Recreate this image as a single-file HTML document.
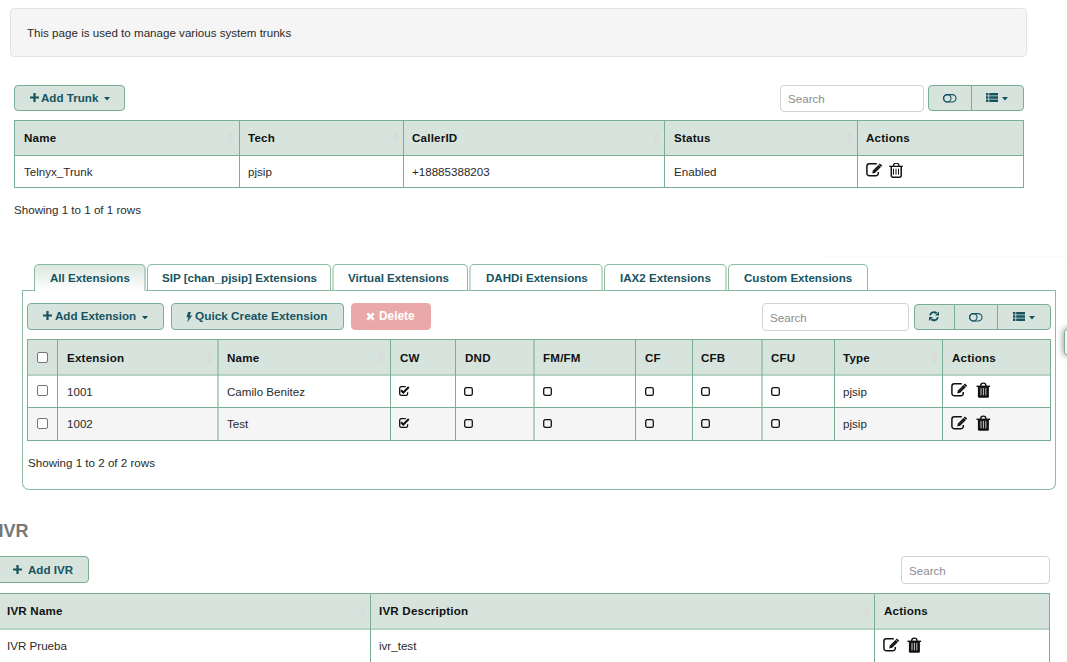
<!DOCTYPE html>
<html><head><meta charset="utf-8"><style>
html,body{margin:0;padding:0;width:1067px;height:662px;overflow:hidden;background:#fff;position:relative;font-family:"Liberation Sans",sans-serif;}
</style></head><body>
<div style="position:absolute;left:10px;top:8px;width:1017px;height:49px;box-sizing:border-box;background:#f5f5f5;border:1px solid #e3e3e3;border-radius:4px"></div><div style="position:absolute;left:27px;top:27.00px;font-size:11.6px;line-height:11.6px;font-weight:400;color:#2a2a2a;white-space:nowrap;">This page is used to manage various system trunks</div><div style="position:absolute;left:14px;top:85px;width:111px;height:26px;box-sizing:border-box;background:#d6e4dd;border:1px solid #7aae93;border-radius:4px"></div><svg style="position:absolute;left:30px;top:93px" width="9" height="9" viewBox="0 0 9 9"><path d="M3.4 0h2.2v3.4H9v2.2H5.6V9H3.4V5.6H0V3.4h3.4z" fill="#17535f"/></svg><div style="position:absolute;left:41px;top:92.00px;font-size:11.6px;line-height:11.6px;font-weight:700;color:#17535f;white-space:nowrap;">Add Trunk</div><svg style="position:absolute;left:103.5px;top:97px" width="6" height="3.5" viewBox="0 0 6 3.5"><path d="M0 0h6L3 3.5z" fill="#17535f"/></svg><div style="position:absolute;left:780px;top:85px;width:144px;height:27px;box-sizing:border-box;background:#fff;border:1px solid #d2d2d2;border-radius:4px"></div><div style="position:absolute;left:788px;top:93.00px;font-size:11.6px;line-height:11.6px;font-weight:400;color:#8c8c8c;white-space:nowrap;">Search</div><div style="position:absolute;left:928px;top:85px;width:96px;height:26px;box-sizing:border-box;background:#d6e4dd;border:1px solid #7aae93;border-radius:4px"></div><div style="position:absolute;left:971px;top:86px;width:1px;height:24px;box-sizing:border-box;background:#7aae93"></div><svg style="position:absolute;left:943.3px;top:93.5px" width="14" height="9" viewBox="0 0 14 9"><rect x="0.6" y="0.6" width="12.4" height="7.4" rx="3.7" fill="none" stroke="#17535f" stroke-width="1.1"/><circle cx="4.3" cy="4.3" r="3.7" fill="none" stroke="#17535f" stroke-width="1.1"/></svg><svg style="position:absolute;left:986px;top:93px" width="12" height="9" viewBox="0 0 12 9"><path d="M0 0h2.4v2.4H0zM0 3.3h2.4v2.4H0zM0 6.6h2.4V9H0zM3.2 0H12v2.4H3.2zM3.2 3.3H12v2.4H3.2zM3.2 6.6H12V9H3.2z" fill="#17535f"/></svg><svg style="position:absolute;left:1002px;top:97px" width="6" height="3.5" viewBox="0 0 6 3.5"><path d="M0 0h6L3 3.5z" fill="#17535f"/></svg><div style="position:absolute;left:14px;top:120px;width:1010px;height:35px;box-sizing:border-box;background:#d6e4dd"></div><div style="position:absolute;left:14px;top:120px;width:1010px;height:1px;box-sizing:border-box;background:#7aae93"></div><div style="position:absolute;left:14px;top:155px;width:1010px;height:1px;box-sizing:border-box;background:#7aae93"></div><div style="position:absolute;left:14px;top:187px;width:1010px;height:1px;box-sizing:border-box;background:#7aae93"></div><div style="position:absolute;left:14px;top:120px;width:1px;height:68px;box-sizing:border-box;background:#7aae93"></div><div style="position:absolute;left:1023px;top:120px;width:1px;height:68px;box-sizing:border-box;background:#7aae93"></div><div style="position:absolute;left:239px;top:120px;width:1px;height:68px;box-sizing:border-box;background:#7aae93"></div><div style="position:absolute;left:403px;top:120px;width:1px;height:68px;box-sizing:border-box;background:#7aae93"></div><div style="position:absolute;left:664px;top:120px;width:1px;height:68px;box-sizing:border-box;background:#7aae93"></div><div style="position:absolute;left:857px;top:120px;width:1px;height:68px;box-sizing:border-box;background:#7aae93"></div><div style="position:absolute;left:24px;top:132.00px;font-size:11.6px;line-height:11.6px;font-weight:700;color:#111;white-space:nowrap;letter-spacing:0.2px">Name</div><div style="position:absolute;left:248px;top:132.00px;font-size:11.6px;line-height:11.6px;font-weight:700;color:#111;white-space:nowrap;letter-spacing:0.2px">Tech</div><div style="position:absolute;left:412px;top:132.00px;font-size:11.6px;line-height:11.6px;font-weight:700;color:#111;white-space:nowrap;letter-spacing:0.2px">CallerID</div><div style="position:absolute;left:674px;top:132.00px;font-size:11.6px;line-height:11.6px;font-weight:700;color:#111;white-space:nowrap;letter-spacing:0.2px">Status</div><div style="position:absolute;left:866px;top:132.00px;font-size:11.6px;line-height:11.6px;font-weight:700;color:#111;white-space:nowrap;letter-spacing:0.2px">Actions</div><div style="position:absolute;left:24px;top:166.00px;font-size:11.6px;line-height:11.6px;font-weight:400;color:#2a2a2a;white-space:nowrap;">Telnyx_Trunk</div><div style="position:absolute;left:248px;top:166.00px;font-size:11.6px;line-height:11.6px;font-weight:400;color:#2a2a2a;white-space:nowrap;">pjsip</div><div style="position:absolute;left:412px;top:166.00px;font-size:11.6px;line-height:11.6px;font-weight:400;color:#2a2a2a;white-space:nowrap;">+18885388203</div><div style="position:absolute;left:674px;top:166.00px;font-size:11.6px;line-height:11.6px;font-weight:400;color:#2a2a2a;white-space:nowrap;">Enabled</div><svg style="position:absolute;left:864px;top:161px" width="20" height="16" viewBox="0 0 20 16"><path d="M12.8 2.8H5.4A2.5 2.5 0 0 0 2.9 5.3V12.2A2.5 2.5 0 0 0 5.4 14.7H11.8A2.5 2.5 0 0 0 14.3 12.2V11" fill="none" stroke="#111" stroke-width="1.5"/><path d="M8.2 12.4L8.9 9.5L15.9 2.5L18.2 4.8L11.2 11.8Z" fill="#111"/><path d="M14.6 3.8L16.9 6.1" stroke="#fff" stroke-width="0.6"/><path d="M10.3 10.1L14.3 6.1" stroke="#777" stroke-width="0.7" stroke-dasharray="0.8 0.8"/></svg><svg style="position:absolute;left:889px;top:163px" width="14" height="15" viewBox="0 0 14 15"><rect x="0.2" y="2.7" width="13.6" height="1.3" fill="#111"/><path d="M4.4 3V2.9A2.8 2.8 0 0 1 10 2.9V3" fill="none" stroke="#111" stroke-width="1.2"/><path d="M2.3 3.6V12.7A1.5 1.5 0 0 0 3.8 14.2H10.7A1.5 1.5 0 0 0 12.2 12.7V3.6" fill="none" stroke="#111" stroke-width="1.5"/><path d="M4.5 5.7v5.9M7 5.7v5.9M9.5 5.7v5.9" stroke="#111" stroke-width="1"/></svg><svg style="position:absolute;left:227.0px;top:132.2px" width="7" height="11.5" viewBox="0 0 7 11.5"><path d="M0 5.2L3.5 0L7 5.2zM0 6.3L3.5 11.5L7 6.3z" fill="#d9dbda"/></svg><svg style="position:absolute;left:391.5px;top:132.2px" width="7" height="11.5" viewBox="0 0 7 11.5"><path d="M0 5.2L3.5 0L7 5.2zM0 6.3L3.5 11.5L7 6.3z" fill="#d9dbda"/></svg><svg style="position:absolute;left:652.5px;top:132.2px" width="7" height="11.5" viewBox="0 0 7 11.5"><path d="M0 5.2L3.5 0L7 5.2zM0 6.3L3.5 11.5L7 6.3z" fill="#d9dbda"/></svg><svg style="position:absolute;left:845.5px;top:132.2px" width="7" height="11.5" viewBox="0 0 7 11.5"><path d="M0 5.2L3.5 0L7 5.2zM0 6.3L3.5 11.5L7 6.3z" fill="#d9dbda"/></svg><div style="position:absolute;left:14px;top:204.00px;font-size:11.6px;line-height:11.6px;font-weight:400;color:#2a2a2a;white-space:nowrap;">Showing 1 to 1 of 1 rows</div><div style="position:absolute;left:22px;top:290px;width:1034px;height:200px;box-sizing:border-box;border:1px solid #8cbba1;border-top:none;border-radius:0 0 7px 7px"></div><div style="position:absolute;left:22px;top:290px;width:1034px;height:1px;box-sizing:border-box;background:#8cbba1"></div><div style="position:absolute;left:34px;top:264px;width:112px;height:27px;box-sizing:border-box;border-top:1px solid #8cbba1;border-left:1px solid #8cbba1;border-right:2px solid rgba(140,187,161,0.55);border-radius:5px 5px 0 0;background:linear-gradient(#dbe7e1,#fff)"></div><div style="position:absolute;left:50px;top:272.00px;font-size:11.6px;line-height:11.6px;font-weight:700;color:#17535f;white-space:nowrap;">All Extensions</div><div style="position:absolute;left:147px;top:264px;width:184px;height:26px;box-sizing:border-box;border-top:1px solid #8cbba1;border-left:1px solid #8cbba1;border-right:1px solid #8cbba1;border-radius:5px 5px 0 0;background:#fff"></div><div style="position:absolute;left:162px;top:272.00px;font-size:11.6px;line-height:11.6px;font-weight:700;color:#17535f;white-space:nowrap;">SIP [chan_pjsip] Extensions</div><div style="position:absolute;left:332px;top:264px;width:136px;height:26px;box-sizing:border-box;border-top:1px solid #8cbba1;border-left:2px solid rgba(140,187,161,0.55);border-right:1px solid #8cbba1;border-radius:5px 5px 0 0;background:#fff"></div><div style="position:absolute;left:348px;top:272.00px;font-size:11.6px;line-height:11.6px;font-weight:700;color:#17535f;white-space:nowrap;">Virtual Extensions</div><div style="position:absolute;left:469px;top:264px;width:134px;height:26px;box-sizing:border-box;border-top:1px solid #8cbba1;border-left:2px solid rgba(140,187,161,0.55);border-right:2px solid rgba(140,187,161,0.55);border-radius:5px 5px 0 0;background:#fff"></div><div style="position:absolute;left:486px;top:272.00px;font-size:11.6px;line-height:11.6px;font-weight:700;color:#17535f;white-space:nowrap;">DAHDi Extensions</div><div style="position:absolute;left:604px;top:264px;width:123px;height:26px;box-sizing:border-box;border-top:1px solid #8cbba1;border-left:1px solid #8cbba1;border-right:2px solid rgba(140,187,161,0.55);border-radius:5px 5px 0 0;background:#fff"></div><div style="position:absolute;left:620px;top:272.00px;font-size:11.6px;line-height:11.6px;font-weight:700;color:#17535f;white-space:nowrap;">IAX2 Extensions</div><div style="position:absolute;left:728px;top:264px;width:140px;height:26px;box-sizing:border-box;border-top:1px solid #8cbba1;border-left:1px solid #8cbba1;border-right:1px solid #8cbba1;border-radius:5px 5px 0 0;background:#fff"></div><div style="position:absolute;left:744px;top:272.00px;font-size:11.6px;line-height:11.6px;font-weight:700;color:#17535f;white-space:nowrap;">Custom Extensions</div><div style="position:absolute;left:27px;top:303px;width:137px;height:27px;box-sizing:border-box;background:#d6e4dd;border:1px solid #7aae93;border-radius:4px"></div><svg style="position:absolute;left:43px;top:311px" width="9" height="9" viewBox="0 0 9 9"><path d="M3.4 0h2.2v3.4H9v2.2H5.6V9H3.4V5.6H0V3.4h3.4z" fill="#17535f"/></svg><div style="position:absolute;left:55px;top:310.00px;font-size:11.6px;line-height:11.6px;font-weight:700;color:#17535f;white-space:nowrap;">Add Extension</div><svg style="position:absolute;left:141.5px;top:315.8px" width="6" height="3.5" viewBox="0 0 6 3.5"><path d="M0 0h6L3 3.5z" fill="#17535f"/></svg><div style="position:absolute;left:171px;top:303px;width:173px;height:27px;box-sizing:border-box;background:#d6e4dd;border:1px solid #7aae93;border-radius:4px"></div><svg style="position:absolute;left:185.9px;top:311.6px" width="6.5" height="10.5" viewBox="0 0 6.5 10.5"><path d="M2.2 0H5L3.6 3.4H6.2L1.2 10.5L2.4 5.2H0.4Z" fill="#17535f"/></svg><div style="position:absolute;left:195px;top:311.00px;font-size:11.8px;line-height:11.8px;font-weight:700;color:#17535f;white-space:nowrap;">Quick Create Extension</div><div style="position:absolute;left:351px;top:303px;width:80px;height:27px;box-sizing:border-box;background:#eba8a8;border:1px solid #eba8a8;border-radius:4px"></div><svg style="position:absolute;left:366px;top:311.5px" width="9" height="9" viewBox="0 0 9 9"><path d="M1.3 1.3l6.4 6.4M7.7 1.3L1.3 7.7" stroke="#fff" stroke-width="2.6"/></svg><div style="position:absolute;left:379px;top:311.00px;font-size:11.9px;line-height:11.9px;font-weight:700;color:#fff;white-space:nowrap;">Delete</div><div style="position:absolute;left:762px;top:303px;width:147px;height:28px;box-sizing:border-box;background:#fff;border:1px solid #d2d2d2;border-radius:4px"></div><div style="position:absolute;left:770px;top:312.00px;font-size:11.6px;line-height:11.6px;font-weight:400;color:#8c8c8c;white-space:nowrap;">Search</div><div style="position:absolute;left:914px;top:304px;width:137px;height:26px;box-sizing:border-box;background:#d6e4dd;border:1px solid #7aae93;border-radius:4px"></div><div style="position:absolute;left:954px;top:305px;width:1px;height:24px;box-sizing:border-box;background:#7aae93"></div><div style="position:absolute;left:997px;top:305px;width:1px;height:24px;box-sizing:border-box;background:#7aae93"></div><svg style="position:absolute;left:929.2px;top:311.3px" width="10" height="10.5" viewBox="0 0 10 10.5"><path d="M1.1 4.4A3.9 3.9 0 0 1 7.6 2.3M8.9 6.1A3.9 3.9 0 0 1 2.4 8.2" fill="none" stroke="#17535f" stroke-width="1.9"/><path d="M10 0.6V4.6H6zM0 9.9V5.9H4z" fill="#17535f"/></svg><svg style="position:absolute;left:969.3px;top:312.8px" width="14" height="9" viewBox="0 0 14 9"><rect x="0.6" y="0.6" width="12.4" height="7.4" rx="3.7" fill="none" stroke="#17535f" stroke-width="1.1"/><circle cx="4.3" cy="4.3" r="3.7" fill="none" stroke="#17535f" stroke-width="1.1"/></svg><svg style="position:absolute;left:1012.7px;top:311.9px" width="12" height="9" viewBox="0 0 12 9"><path d="M0 0h2.4v2.4H0zM0 3.3h2.4v2.4H0zM0 6.6h2.4V9H0zM3.2 0H12v2.4H3.2zM3.2 3.3H12v2.4H3.2zM3.2 6.6H12V9H3.2z" fill="#17535f"/></svg><svg style="position:absolute;left:1029px;top:316px" width="6" height="3.5" viewBox="0 0 6 3.5"><path d="M0 0h6L3 3.5z" fill="#17535f"/></svg><div style="position:absolute;left:27px;top:339px;width:1024px;height:35px;box-sizing:border-box;background:#d6e4dd"></div><div style="position:absolute;left:27px;top:407px;width:1024px;height:33px;box-sizing:border-box;background:#f5f5f5"></div><div style="position:absolute;left:27px;top:339px;width:1024px;height:1px;box-sizing:border-box;background:#7aae93"></div><div style="position:absolute;left:27px;top:374px;width:1024px;height:2px;box-sizing:border-box;background:rgba(122,174,147,0.55)"></div><div style="position:absolute;left:27px;top:407px;width:1024px;height:1px;box-sizing:border-box;background:#7aae93"></div><div style="position:absolute;left:27px;top:440px;width:1024px;height:1px;box-sizing:border-box;background:#7aae93"></div><div style="position:absolute;left:27px;top:339px;width:1px;height:102px;box-sizing:border-box;background:#7aae93"></div><div style="position:absolute;left:1050px;top:339px;width:1px;height:102px;box-sizing:border-box;background:#7aae93"></div><div style="position:absolute;left:57px;top:339px;width:1px;height:102px;box-sizing:border-box;background:#7aae93"></div><div style="position:absolute;left:217px;top:339px;width:2px;height:102px;box-sizing:border-box;background:rgba(122,174,147,0.55)"></div><div style="position:absolute;left:390px;top:339px;width:1px;height:102px;box-sizing:border-box;background:#7aae93"></div><div style="position:absolute;left:455px;top:339px;width:1px;height:102px;box-sizing:border-box;background:#7aae93"></div><div style="position:absolute;left:533px;top:339px;width:2px;height:102px;box-sizing:border-box;background:rgba(122,174,147,0.55)"></div><div style="position:absolute;left:635px;top:339px;width:1px;height:102px;box-sizing:border-box;background:#7aae93"></div><div style="position:absolute;left:692px;top:339px;width:1px;height:102px;box-sizing:border-box;background:#7aae93"></div><div style="position:absolute;left:761px;top:339px;width:2px;height:102px;box-sizing:border-box;background:rgba(122,174,147,0.55)"></div><div style="position:absolute;left:834px;top:339px;width:1px;height:102px;box-sizing:border-box;background:#7aae93"></div><div style="position:absolute;left:942px;top:339px;width:1px;height:102px;box-sizing:border-box;background:#7aae93"></div><div style="position:absolute;left:67px;top:352.00px;font-size:11.6px;line-height:11.6px;font-weight:700;color:#111;white-space:nowrap;letter-spacing:0.2px">Extension</div><div style="position:absolute;left:227px;top:352.00px;font-size:11.6px;line-height:11.6px;font-weight:700;color:#111;white-space:nowrap;letter-spacing:0.2px">Name</div><div style="position:absolute;left:400px;top:352.00px;font-size:11.6px;line-height:11.6px;font-weight:700;color:#111;white-space:nowrap;letter-spacing:0.2px">CW</div><div style="position:absolute;left:465px;top:352.00px;font-size:11.6px;line-height:11.6px;font-weight:700;color:#111;white-space:nowrap;letter-spacing:0.2px">DND</div><div style="position:absolute;left:543px;top:352.00px;font-size:11.6px;line-height:11.6px;font-weight:700;color:#111;white-space:nowrap;letter-spacing:0.2px">FM/FM</div><div style="position:absolute;left:645px;top:352.00px;font-size:11.6px;line-height:11.6px;font-weight:700;color:#111;white-space:nowrap;letter-spacing:0.2px">CF</div><div style="position:absolute;left:701px;top:352.00px;font-size:11.6px;line-height:11.6px;font-weight:700;color:#111;white-space:nowrap;letter-spacing:0.2px">CFB</div><div style="position:absolute;left:771px;top:352.00px;font-size:11.6px;line-height:11.6px;font-weight:700;color:#111;white-space:nowrap;letter-spacing:0.2px">CFU</div><div style="position:absolute;left:843px;top:352.00px;font-size:11.6px;line-height:11.6px;font-weight:700;color:#111;white-space:nowrap;letter-spacing:0.2px">Type</div><div style="position:absolute;left:952px;top:352.00px;font-size:11.6px;line-height:11.6px;font-weight:700;color:#111;white-space:nowrap;letter-spacing:0.2px">Actions</div><div style="position:absolute;left:37px;top:352px;width:11px;height:11px;box-sizing:border-box;border:1px solid #767676;border-radius:2px;background:#fff"></div><div style="position:absolute;left:37px;top:385px;width:11px;height:11px;box-sizing:border-box;border:1px solid #767676;border-radius:2px;background:#fff"></div><div style="position:absolute;left:67px;top:386.00px;font-size:11.6px;line-height:11.6px;font-weight:400;color:#2a2a2a;white-space:nowrap;">1001</div><div style="position:absolute;left:227px;top:386.00px;font-size:11.6px;line-height:11.6px;font-weight:400;color:#2a2a2a;white-space:nowrap;">Camilo Benitez</div><svg style="position:absolute;left:399px;top:386px" width="11" height="10" viewBox="0 0 11 10"><path d="M6.8 0.7H2.3A1.6 1.6 0 0 0 0.7 2.3V7.7A1.6 1.6 0 0 0 2.3 9.3H7A1.6 1.6 0 0 0 8.6 7.7V6.2" fill="none" stroke="#111" stroke-width="1.3"/><path d="M2 4.2l2.3 2.3L9.8 1" fill="none" stroke="#111" stroke-width="2"/></svg><svg style="position:absolute;left:464px;top:387px" width="9" height="9" viewBox="0 0 9 9"><rect x="0.7" y="0.7" width="7.6" height="7.6" rx="1.6" fill="none" stroke="#111" stroke-width="1.3"/></svg><svg style="position:absolute;left:543px;top:387px" width="9" height="9" viewBox="0 0 9 9"><rect x="0.7" y="0.7" width="7.6" height="7.6" rx="1.6" fill="none" stroke="#111" stroke-width="1.3"/></svg><svg style="position:absolute;left:645px;top:387px" width="9" height="9" viewBox="0 0 9 9"><rect x="0.7" y="0.7" width="7.6" height="7.6" rx="1.6" fill="none" stroke="#111" stroke-width="1.3"/></svg><svg style="position:absolute;left:701px;top:387px" width="9" height="9" viewBox="0 0 9 9"><rect x="0.7" y="0.7" width="7.6" height="7.6" rx="1.6" fill="none" stroke="#111" stroke-width="1.3"/></svg><svg style="position:absolute;left:771px;top:387px" width="9" height="9" viewBox="0 0 9 9"><rect x="0.7" y="0.7" width="7.6" height="7.6" rx="1.6" fill="none" stroke="#111" stroke-width="1.3"/></svg><div style="position:absolute;left:843px;top:386.00px;font-size:11.6px;line-height:11.6px;font-weight:400;color:#2a2a2a;white-space:nowrap;">pjsip</div><svg style="position:absolute;left:949px;top:381.0px" width="20" height="16" viewBox="0 0 20 16"><path d="M12.8 2.8H5.4A2.5 2.5 0 0 0 2.9 5.3V12.2A2.5 2.5 0 0 0 5.4 14.7H11.8A2.5 2.5 0 0 0 14.3 12.2V11" fill="none" stroke="#111" stroke-width="1.5"/><path d="M8.2 12.4L8.9 9.5L15.9 2.5L18.2 4.8L11.2 11.8Z" fill="#111"/><path d="M14.6 3.8L16.9 6.1" stroke="#fff" stroke-width="0.6"/><path d="M10.3 10.1L14.3 6.1" stroke="#777" stroke-width="0.7" stroke-dasharray="0.8 0.8"/></svg><svg style="position:absolute;left:976px;top:382.0px" width="15" height="16" viewBox="0 0 15 16"><rect x="0.5" y="3.6" width="13.6" height="1.4" fill="#111"/><path d="M4.6 4V3.9A2.7 2.7 0 0 1 10 3.9V4" fill="none" stroke="#111" stroke-width="1.3"/><path d="M1.9 4.5H12.9V14.4A1.3 1.3 0 0 1 11.6 15.7H3.2A1.3 1.3 0 0 1 1.9 14.4Z" fill="#111"/><path d="M5 5.9v7.4M7.4 5.9v7.4M9.8 5.9v7.4" stroke="#ddd" stroke-width="0.9"/></svg><div style="position:absolute;left:37px;top:418px;width:11px;height:11px;box-sizing:border-box;border:1px solid #767676;border-radius:2px;background:#fff"></div><div style="position:absolute;left:67px;top:418.00px;font-size:11.6px;line-height:11.6px;font-weight:400;color:#2a2a2a;white-space:nowrap;">1002</div><div style="position:absolute;left:227px;top:418.00px;font-size:11.6px;line-height:11.6px;font-weight:400;color:#2a2a2a;white-space:nowrap;">Test</div><svg style="position:absolute;left:399px;top:418px" width="11" height="10" viewBox="0 0 11 10"><path d="M6.8 0.7H2.3A1.6 1.6 0 0 0 0.7 2.3V7.7A1.6 1.6 0 0 0 2.3 9.3H7A1.6 1.6 0 0 0 8.6 7.7V6.2" fill="none" stroke="#111" stroke-width="1.3"/><path d="M2 4.2l2.3 2.3L9.8 1" fill="none" stroke="#111" stroke-width="2"/></svg><svg style="position:absolute;left:464px;top:419px" width="9" height="9" viewBox="0 0 9 9"><rect x="0.7" y="0.7" width="7.6" height="7.6" rx="1.6" fill="none" stroke="#111" stroke-width="1.3"/></svg><svg style="position:absolute;left:543px;top:419px" width="9" height="9" viewBox="0 0 9 9"><rect x="0.7" y="0.7" width="7.6" height="7.6" rx="1.6" fill="none" stroke="#111" stroke-width="1.3"/></svg><svg style="position:absolute;left:645px;top:419px" width="9" height="9" viewBox="0 0 9 9"><rect x="0.7" y="0.7" width="7.6" height="7.6" rx="1.6" fill="none" stroke="#111" stroke-width="1.3"/></svg><svg style="position:absolute;left:701px;top:419px" width="9" height="9" viewBox="0 0 9 9"><rect x="0.7" y="0.7" width="7.6" height="7.6" rx="1.6" fill="none" stroke="#111" stroke-width="1.3"/></svg><svg style="position:absolute;left:771px;top:419px" width="9" height="9" viewBox="0 0 9 9"><rect x="0.7" y="0.7" width="7.6" height="7.6" rx="1.6" fill="none" stroke="#111" stroke-width="1.3"/></svg><div style="position:absolute;left:843px;top:418.00px;font-size:11.6px;line-height:11.6px;font-weight:400;color:#2a2a2a;white-space:nowrap;">pjsip</div><svg style="position:absolute;left:949px;top:413.5px" width="20" height="16" viewBox="0 0 20 16"><path d="M12.8 2.8H5.4A2.5 2.5 0 0 0 2.9 5.3V12.2A2.5 2.5 0 0 0 5.4 14.7H11.8A2.5 2.5 0 0 0 14.3 12.2V11" fill="none" stroke="#111" stroke-width="1.5"/><path d="M8.2 12.4L8.9 9.5L15.9 2.5L18.2 4.8L11.2 11.8Z" fill="#111"/><path d="M14.6 3.8L16.9 6.1" stroke="#fff" stroke-width="0.6"/><path d="M10.3 10.1L14.3 6.1" stroke="#777" stroke-width="0.7" stroke-dasharray="0.8 0.8"/></svg><svg style="position:absolute;left:976px;top:414.5px" width="15" height="16" viewBox="0 0 15 16"><rect x="0.5" y="3.6" width="13.6" height="1.4" fill="#111"/><path d="M4.6 4V3.9A2.7 2.7 0 0 1 10 3.9V4" fill="none" stroke="#111" stroke-width="1.3"/><path d="M1.9 4.5H12.9V14.4A1.3 1.3 0 0 1 11.6 15.7H3.2A1.3 1.3 0 0 1 1.9 14.4Z" fill="#111"/><path d="M5 5.9v7.4M7.4 5.9v7.4M9.8 5.9v7.4" stroke="#ddd" stroke-width="0.9"/></svg><svg style="position:absolute;left:206.2px;top:351.9px" width="7" height="11.5" viewBox="0 0 7 11.5"><path d="M0 5.2L3.5 0L7 5.2zM0 6.3L3.5 11.5L7 6.3z" fill="#d9dbda"/></svg><svg style="position:absolute;left:378.1px;top:351.9px" width="7" height="11.5" viewBox="0 0 7 11.5"><path d="M0 5.2L3.5 0L7 5.2zM0 6.3L3.5 11.5L7 6.3z" fill="#d9dbda"/></svg><svg style="position:absolute;left:930.5px;top:351.9px" width="7" height="11.5" viewBox="0 0 7 11.5"><path d="M0 5.2L3.5 0L7 5.2zM0 6.3L3.5 11.5L7 6.3z" fill="#d9dbda"/></svg><div style="position:absolute;left:28px;top:457.00px;font-size:11.6px;line-height:11.6px;font-weight:400;color:#2a2a2a;white-space:nowrap;">Showing 1 to 2 of 2 rows</div><div style="position:absolute;left:-1.5px;top:522.00px;font-size:18px;line-height:18px;font-weight:700;color:#777;white-space:nowrap;">IVR</div><div style="position:absolute;left:-6px;top:556px;width:95px;height:27px;box-sizing:border-box;background:#d6e4dd;border:1px solid #7aae93;border-radius:4px"></div><svg style="position:absolute;left:13px;top:565px" width="9" height="9" viewBox="0 0 9 9"><path d="M3.4 0h2.2v3.4H9v2.2H5.6V9H3.4V5.6H0V3.4h3.4z" fill="#17535f"/></svg><div style="position:absolute;left:28px;top:564.00px;font-size:11.6px;line-height:11.6px;font-weight:700;color:#17535f;white-space:nowrap;">Add IVR</div><div style="position:absolute;left:901px;top:556px;width:149px;height:28px;box-sizing:border-box;background:#fff;border:1px solid #d2d2d2;border-radius:4px"></div><div style="position:absolute;left:909px;top:565.00px;font-size:11.6px;line-height:11.6px;font-weight:400;color:#8c8c8c;white-space:nowrap;">Search</div><div style="position:absolute;left:-1px;top:593px;width:1051px;height:35px;box-sizing:border-box;background:#d6e4dd"></div><div style="position:absolute;left:-1px;top:593px;width:1051px;height:1px;box-sizing:border-box;background:#7aae93"></div><div style="position:absolute;left:-1px;top:628px;width:1051px;height:2px;box-sizing:border-box;background:rgba(122,174,147,0.55)"></div><div style="position:absolute;left:-1px;top:593px;width:1px;height:70px;box-sizing:border-box;background:#7aae93"></div><div style="position:absolute;left:1049px;top:593px;width:1px;height:70px;box-sizing:border-box;background:#7aae93"></div><div style="position:absolute;left:370px;top:593px;width:1px;height:70px;box-sizing:border-box;background:#7aae93"></div><div style="position:absolute;left:874px;top:593px;width:1px;height:70px;box-sizing:border-box;background:#7aae93"></div><div style="position:absolute;left:7px;top:605.00px;font-size:11.6px;line-height:11.6px;font-weight:700;color:#111;white-space:nowrap;letter-spacing:0.2px">IVR Name</div><div style="position:absolute;left:379px;top:605.00px;font-size:11.6px;line-height:11.6px;font-weight:700;color:#111;white-space:nowrap;letter-spacing:0.2px">IVR Description</div><div style="position:absolute;left:884px;top:605.00px;font-size:11.6px;line-height:11.6px;font-weight:700;color:#111;white-space:nowrap;letter-spacing:0.2px">Actions</div><svg style="position:absolute;left:358.5px;top:605.8px" width="7" height="11.5" viewBox="0 0 7 11.5"><path d="M0 5.2L3.5 0L7 5.2zM0 6.3L3.5 11.5L7 6.3z" fill="#d9dbda"/></svg><svg style="position:absolute;left:862.5px;top:605.8px" width="7" height="11.5" viewBox="0 0 7 11.5"><path d="M0 5.2L3.5 0L7 5.2zM0 6.3L3.5 11.5L7 6.3z" fill="#d9dbda"/></svg><div style="position:absolute;left:7px;top:640.00px;font-size:11.6px;line-height:11.6px;font-weight:400;color:#2a2a2a;white-space:nowrap;">IVR Prueba</div><div style="position:absolute;left:379px;top:640.00px;font-size:11.6px;line-height:11.6px;font-weight:400;color:#2a2a2a;white-space:nowrap;">ivr_test</div><svg style="position:absolute;left:881px;top:636px" width="20" height="16" viewBox="0 0 20 16"><path d="M12.8 2.8H5.4A2.5 2.5 0 0 0 2.9 5.3V12.2A2.5 2.5 0 0 0 5.4 14.7H11.8A2.5 2.5 0 0 0 14.3 12.2V11" fill="none" stroke="#111" stroke-width="1.5"/><path d="M8.2 12.4L8.9 9.5L15.9 2.5L18.2 4.8L11.2 11.8Z" fill="#111"/><path d="M14.6 3.8L16.9 6.1" stroke="#fff" stroke-width="0.6"/><path d="M10.3 10.1L14.3 6.1" stroke="#777" stroke-width="0.7" stroke-dasharray="0.8 0.8"/></svg><svg style="position:absolute;left:907px;top:637px" width="15" height="16" viewBox="0 0 15 16"><rect x="0.5" y="3.6" width="13.6" height="1.4" fill="#111"/><path d="M4.6 4V3.9A2.7 2.7 0 0 1 10 3.9V4" fill="none" stroke="#111" stroke-width="1.3"/><path d="M1.9 4.5H12.9V14.4A1.3 1.3 0 0 1 11.6 15.7H3.2A1.3 1.3 0 0 1 1.9 14.4Z" fill="#111"/><path d="M5 5.9v7.4M7.4 5.9v7.4M9.8 5.9v7.4" stroke="#ddd" stroke-width="0.9"/></svg><div style="position:absolute;left:1064px;top:328px;width:24px;height:28px;box-sizing:border-box;background:#f3f7f5;border:1px solid #7aae93;border-radius:5px;box-shadow:-1px 0 6px rgba(0,0,0,0.4)"></div><div style="position:absolute;left:822px;top:256px;width:245px;height:1px;box-sizing:border-box;background:#fafafa"></div><div style="position:absolute;left:812px;top:518px;width:255px;height:1px;box-sizing:border-box;background:#fcfcfc"></div>
</body></html>
